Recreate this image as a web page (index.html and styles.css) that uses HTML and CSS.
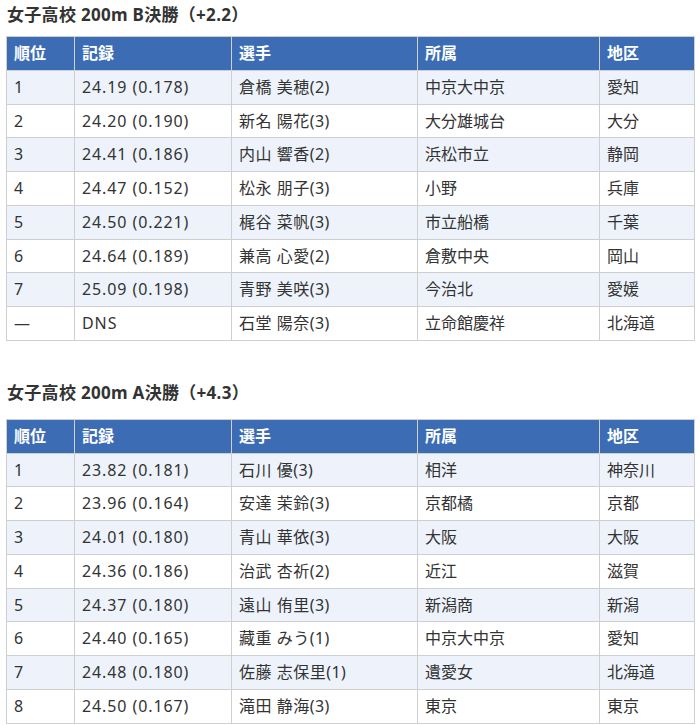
FILE: index.html
```html
<!DOCTYPE html>
<html lang="ja">
<head>
<meta charset="utf-8">
<link rel="stylesheet" href="styles.css">
</head>
<body>
<h2 class="title first">女子高校 200m B決勝（+2.2）</h2>
<table class="results">
<colgroup><col class="c1"><col class="c2"><col class="c3"><col class="c4"><col class="c5"></colgroup>
<thead><tr><th>順位</th><th>記録</th><th>選手</th><th>所属</th><th>地区</th></tr></thead>
<tbody>
<tr><td>1</td><td class="rec">24.19 (0.178)</td><td class="name">倉橋 美穂(2)</td><td>中京大中京</td><td>愛知</td></tr>
<tr><td>2</td><td class="rec">24.20 (0.190)</td><td class="name">新名 陽花(3)</td><td>大分雄城台</td><td>大分</td></tr>
<tr><td>3</td><td class="rec">24.41 (0.186)</td><td class="name">内山 響香(2)</td><td>浜松市立</td><td>静岡</td></tr>
<tr><td>4</td><td class="rec">24.47 (0.152)</td><td class="name">松永 朋子(3)</td><td>小野</td><td>兵庫</td></tr>
<tr><td>5</td><td class="rec">24.50 (0.221)</td><td class="name">梶谷 菜帆(3)</td><td>市立船橋</td><td>千葉</td></tr>
<tr><td>6</td><td class="rec">24.64 (0.189)</td><td class="name">兼高 心愛(2)</td><td>倉敷中央</td><td>岡山</td></tr>
<tr><td>7</td><td class="rec">25.09 (0.198)</td><td class="name">青野 美咲(3)</td><td>今治北</td><td>愛媛</td></tr>
<tr><td>—</td><td class="rec">DNS</td><td class="name">石堂 陽奈(3)</td><td>立命館慶祥</td><td>北海道</td></tr>
</tbody>
</table>
<h2 class="title">女子高校 200m A決勝（+4.3）</h2>
<table class="results">
<colgroup><col class="c1"><col class="c2"><col class="c3"><col class="c4"><col class="c5"></colgroup>
<thead><tr><th>順位</th><th>記録</th><th>選手</th><th>所属</th><th>地区</th></tr></thead>
<tbody>
<tr><td>1</td><td class="rec">23.82 (0.181)</td><td class="name">石川 優(3)</td><td>相洋</td><td>神奈川</td></tr>
<tr><td>2</td><td class="rec">23.96 (0.164)</td><td class="name">安達 茉鈴(3)</td><td>京都橘</td><td>京都</td></tr>
<tr><td>3</td><td class="rec">24.01 (0.180)</td><td class="name">青山 華依(3)</td><td>大阪</td><td>大阪</td></tr>
<tr><td>4</td><td class="rec">24.36 (0.186)</td><td class="name">治武 杏祈(2)</td><td>近江</td><td>滋賀</td></tr>
<tr><td>5</td><td class="rec">24.37 (0.180)</td><td class="name">遠山 侑里(3)</td><td>新潟商</td><td>新潟</td></tr>
<tr><td>6</td><td class="rec">24.40 (0.165)</td><td class="name">藏重 みう(1)</td><td>中京大中京</td><td>愛知</td></tr>
<tr><td>7</td><td class="rec">24.48 (0.180)</td><td class="name">佐藤 志保里(1)</td><td>遺愛女</td><td>北海道</td></tr>
<tr><td>8</td><td class="rec">24.50 (0.167)</td><td class="name">滝田 静海(3)</td><td>東京</td><td>東京</td></tr>
</tbody>
</table>
</body>
</html>
```
FILE: styles.css
```css
html, body {
  margin: 0;
  background: #fff;
}
body {
  padding: 0 6px;
  font-family: "Noto Sans", "Noto Sans CJK JP", sans-serif;
  color: #333;
  font-size: 16px;
}
.title {
  margin: 40px 0 14px 1px;
  font-size: 17px;
  line-height: 24px;
  font-weight: bold;
  color: #333;
  letter-spacing: 0.3px;
}
.title.first {
  margin-top: 3px;
  margin-bottom: 9px;
}
.results {
  width: 688px;
  border-collapse: collapse;
  table-layout: fixed;
}
.c1 { width: 68px; }
.c2 { width: 157px; }
.c3 { width: 186px; }
.c4 { width: 182px; }
.c5 { width: 95px; }
.results th,
.results td {
  border: 1px solid #cfcfcf;
  padding: 5px 7px;
  line-height: 22.75px;
  text-align: left;
  white-space: nowrap;
}
.results th {
  background: #3c6db4;
  color: #fff;
  font-weight: bold;
}
.results td {
  color: #333;
}
.results td.rec {
  letter-spacing: 0.9px;
}
.results td.name {
  letter-spacing: 0.5px;
}
.results tbody tr:nth-child(odd) td {
  background: #eef3fb;
}
```
